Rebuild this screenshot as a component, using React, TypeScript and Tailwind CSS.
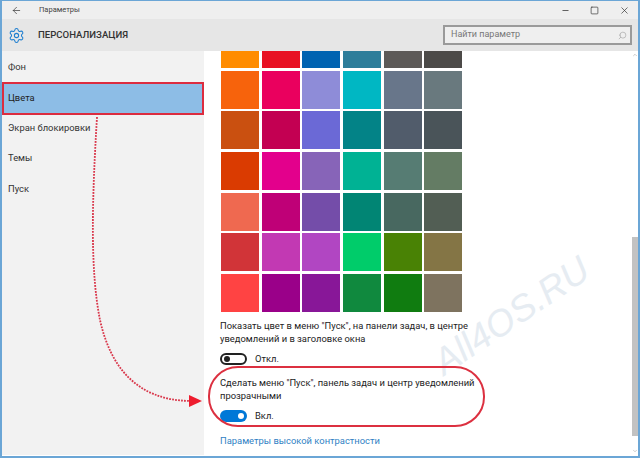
import { ArrowLeft, Minus, Search, Settings, Square, X, ChevronUp, ChevronDown } from 'lucide-react';

const swatches = [
  ['#ff8c00', '#e81123', '#0063b1', '#2d7d9a', '#5d5a58', '#4c4a48'],
  ['#f7630c', '#ea005e', '#8e8cd8', '#00b7c3', '#68768a', '#69797e'],
  ['#ca5010', '#c30052', '#6b69d6', '#038387', '#515c6b', '#4a5459'],
  ['#da3b01', '#e3008c', '#8764b8', '#00b294', '#567c73', '#647c64'],
  ['#ef6950', '#bf0077', '#744da9', '#018574', '#486860', '#525e54'],
  ['#d13438', '#c239b3', '#b146c2', '#00cc6a', '#498205', '#847545'],
  ['#ff4343', '#9a0089', '#881798', '#10893e', '#107c10', '#7e735f'],
];

const navItems = ['Фон', 'Цвета', 'Экран блокировки', 'Темы', 'Пуск'];

export default function App() {
  return (
    <div className="relative w-[640px] h-[458px] overflow-hidden bg-white text-[#222] border-x-2 border-t border-b-2 border-[#6ba6d6] font-['Roboto',sans-serif]">
      {/* Title bar */}
      <div className="h-[18px] bg-[#efefef] flex items-center">
        <ArrowLeft className="ml-[9px] w-[11px] h-[11px] text-[#333]" strokeWidth={1.5} />
        <span className="ml-[17px] text-[7.5px] text-[#444]">Параметры</span>
        <div className="ml-auto flex items-center gap-[20px] pr-[8px]">
          <Minus className="w-[9px] h-[9px] text-[#333]" strokeWidth={2} />
          <Square className="w-[9px] h-[9px] text-[#333]" strokeWidth={1.8} />
          <X className="w-[11px] h-[11px] text-[#333]" strokeWidth={1.5} />
        </div>
      </div>

      {/* Header */}
      <div className="h-[32px] bg-[#e6e6e6] flex items-center">
        <Settings className="ml-[6px] w-[17px] h-[17px] text-[#1f7fd0]" strokeWidth={1.5} />
        <span className="ml-[13px] text-[9.6px] font-medium text-[#333]">ПЕРСОНАЛИЗАЦИЯ</span>
        <div className="ml-auto mr-[6px] w-[189px] h-[20px] border-2 border-[#9a9a9a] bg-[#efefef] flex items-center pl-[6px] pr-[3px]">
          <span className="text-[9px] text-[#777]">Найти параметр</span>
          <Search className="ml-auto w-[9px] h-[9px] text-[#999] -scale-x-100" strokeWidth={1.5} />
        </div>
      </div>

      <div className="flex h-[404px]">
        {/* Sidebar */}
        <div className="w-[202px] bg-[#f2f2f2] pt-[1px]">
          {navItems.map((item) =>
            item === 'Цвета' ? (
              <div key={item} className="h-[33px] -mt-[1px] -mb-[2px] bg-[#8dbde6] border-2 border-[#dc2c3f] flex items-center pl-[4px] text-[9.4px]">
                {item}
              </div>
            ) : (
              <div key={item} className="h-[30.5px] flex items-center pl-[6px] text-[9.4px] text-[#333]">
                {item}
              </div>
            ),
          )}
        </div>

        {/* Content */}
        <div className="flex-1 relative pl-[17px]">
          <div className="grid grid-cols-[repeat(6,38px)] gap-[2.7px] w-max">
            {swatches.flatMap((row, r) =>
              row.map((color) => (
                <div key={color} className={r === 0 ? 'h-[17px]' : 'h-[38px]'} style={{ backgroundColor: color }} />
              )),
            )}
          </div>

          <p className="mt-[7px] -ml-[1px] text-[9.4px] leading-[13px] w-[258px]">
            Показать цвет в меню "Пуск", на панели задач, в центре уведомлений и в заголовке окна
          </p>
          <div className="mt-[7px] -ml-[1px] flex items-center gap-[8px]">
            <div className="w-[27px] h-[12px] rounded-full border-2 border-[#222] flex items-center pl-[2px]">
              <div className="w-[6px] h-[6px] rounded-full bg-[#222]" />
            </div>
            <span className="text-[9.4px]">Откл.</span>
          </div>

          <p className="mt-[10px] -ml-[1px] text-[9.4px] leading-[13px] w-[258px]">
            Сделать меню "Пуск", панель задач и центр уведомлений прозрачными
          </p>
          <div className="mt-[7px] -ml-[1px] flex items-center gap-[8px]">
            <div className="w-[27px] h-[12px] rounded-full bg-[#0078d7] flex items-center justify-end pr-[3px]">
              <div className="w-[6px] h-[6px] rounded-full bg-white" />
            </div>
            <span className="text-[9.4px]">Вкл.</span>
          </div>
          <p className="mt-[11px] -ml-[1px] text-[9.4px] text-[#2f7fc4]">Параметры высокой контрастности</p>

          {/* Scrollbar */}
          <div className="absolute right-0 top-0 bottom-0 w-[6px] flex flex-col items-center">
            <ChevronUp className="mt-[1px] w-[6px] h-[6px] text-[#999]" />
            <div className="w-full h-[199px] mt-[179px] bg-[#c2c2c2]" />
            <ChevronDown className="mt-auto mb-[1px] w-[6px] h-[6px] text-[#999]" />
          </div>
        </div>
      </div>

      {/* Watermark */}
      <div className="absolute left-[420px] top-[287px] -rotate-[34deg] text-[37px] italic font-['Liberation_Sans',sans-serif] text-[#e6ecf2] whitespace-nowrap pointer-events-none">
        All4OS.RU
      </div>

      {/* Red annotation */}
      <div className="absolute left-[206px] top-[365px] w-[277px] h-[61px] rounded-[30px] border-2 border-[#dc3040]" />
      <svg className="absolute -left-[2px] -top-[1px] pointer-events-none" width="640" height="458" fill="none">
        <path d="M97 117 C92 200 90 270 100 320 C110 365 135 400 190 401" stroke="#d9364a" strokeWidth="1.8" strokeDasharray="1.8 1.2" />
        <path d="M189 395 L202 401 L189 407 Z" fill="#ee1c2e" />
      </svg>
    </div>
  );
}
